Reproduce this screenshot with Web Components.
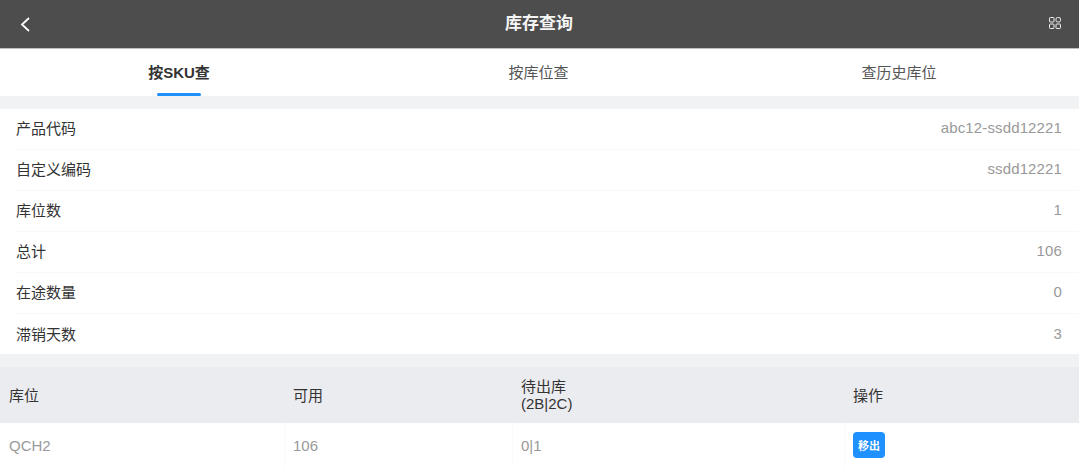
<!DOCTYPE html>
<html lang="zh"><head><meta charset="utf-8"><style>
html,body{margin:0;padding:0;background:#fff;overflow:hidden}
body{width:1079px;height:467px;font:15px "Liberation Sans","Noto Sans CJK SC",sans-serif;color:#333}
</style></head><body>
<app-header title="库存查询"></app-header>
<app-tabs></app-tabs>
<info-list>
<info-row label="产品代码" value="abc12-ssdd12221"></info-row>
<info-row label="自定义编码" value="ssdd12221"></info-row>
<info-row label="库位数" value="1"></info-row>
<info-row label="总计" value="106"></info-row>
<info-row label="在途数量" value="0"></info-row>
<info-row label="滞销天数" value="3" last></info-row>
</info-list>
<stock-table></stock-table>
<script>
function def(name,html,init){customElements.define(name,class extends HTMLElement{constructor(){super();this.attachShadow({mode:'open'}).innerHTML=html;}connectedCallback(){init&&init(this,this.shadowRoot);}});}
def('app-header',`<style>:host{display:flex;align-items:center;justify-content:space-between;box-sizing:border-box;height:49px;background:#4d4d4d;border-bottom:1px solid #bdbdbd;padding:0 18px 0 20px;color:#fff}
h1{margin:0;font-size:17px;font-weight:700;flex:1;text-align:center;color:#f5f5f5;padding-right:2px;line-height:48px}svg{display:block;flex:none}.m{margin-top:-2px}</style>
<svg width="11" height="16" viewBox="0 0 11 16" fill="none" stroke="#fff" stroke-width="1.8"><path d="M9 2 2 8.5 9 15"/></svg>
<h1 id="t"></h1>
<svg class="m" width="12" height="12" viewBox="0 0 12 12" fill="none" stroke="#f0f0f0" stroke-width="1"><rect x=".5" y=".5" width="4.5" height="4.5" rx=".8"/><rect x="7" y=".5" width="4.5" height="4.5" rx="1.6"/><rect x=".5" y="7" width="4.5" height="4.5" rx=".8"/><rect x="7" y="7" width="4.5" height="4.5" rx=".8"/></svg>`,(e,s)=>{s.getElementById('t').textContent=e.getAttribute('title')});
def('app-tabs',`<style>:host{display:grid;grid-template-columns:358px 361px 360px;height:47px;background:#fff}
div{position:relative;text-align:center;line-height:47px;font-size:15px;color:#555}
.on{font-weight:700;color:#333}.on::after{content:"";position:absolute;left:50%;bottom:0;width:44px;height:3px;margin-left:-22px;border-radius:2px;background:#1e90ff}</style>
<div class="on">按SKU查</div><div>按库位查</div><div>查历史库位</div>`);
def('info-list',`<style>:host{display:block;background:#fff;border-top:13px solid #f1f2f4;border-bottom:13px solid #f1f2f4}</style><slot></slot>`);
def('info-row',`<style>:host{display:block;padding-left:16px;background:#fff}
div{display:flex;justify-content:space-between;align-items:center;box-sizing:border-box;height:41px;padding:0 17px 3px 0;border-bottom:1px solid #f8f8f8;color:#333}
:host([last]) div{height:40px;border-bottom:0;padding-bottom:1px}
b{font-weight:400;color:#999;letter-spacing:.13px}</style><div><span id="l"></span><b id="v"></b></div>`,(e,s)=>{s.getElementById('l').textContent=e.getAttribute('label');s.getElementById('v').textContent=e.getAttribute('value')});
def('stock-table',`<style>:host{display:block}
.g{display:grid;grid-template-columns:284px 228px 332px 1fr}
.h{height:56px;background:#ebecf0;align-items:center;color:#333}
.h span{padding-left:9px;line-height:17px}
.r{height:44px;color:#999}
.r span{display:flex;align-items:center;padding-left:8px;box-sizing:border-box;border-left:1px solid #fafafa}
.r span:first-child{border-left:0;padding-left:9px}
button{width:32px;height:26px;padding:0;border:0;border-radius:4px;background:#1e90ff;color:#fff;font:700 11px "Liberation Sans","Noto Sans CJK SC",sans-serif}</style>
<div class="g h"><span>库位</span><span>可用</span><span>待出库<br>(2B|2C)</span><span>操作</span></div>
<div class="g r"><span>QCH2</span><span>106</span><span>0|1</span><span><button>移出</button></span></div>`);
</script></body></html>
